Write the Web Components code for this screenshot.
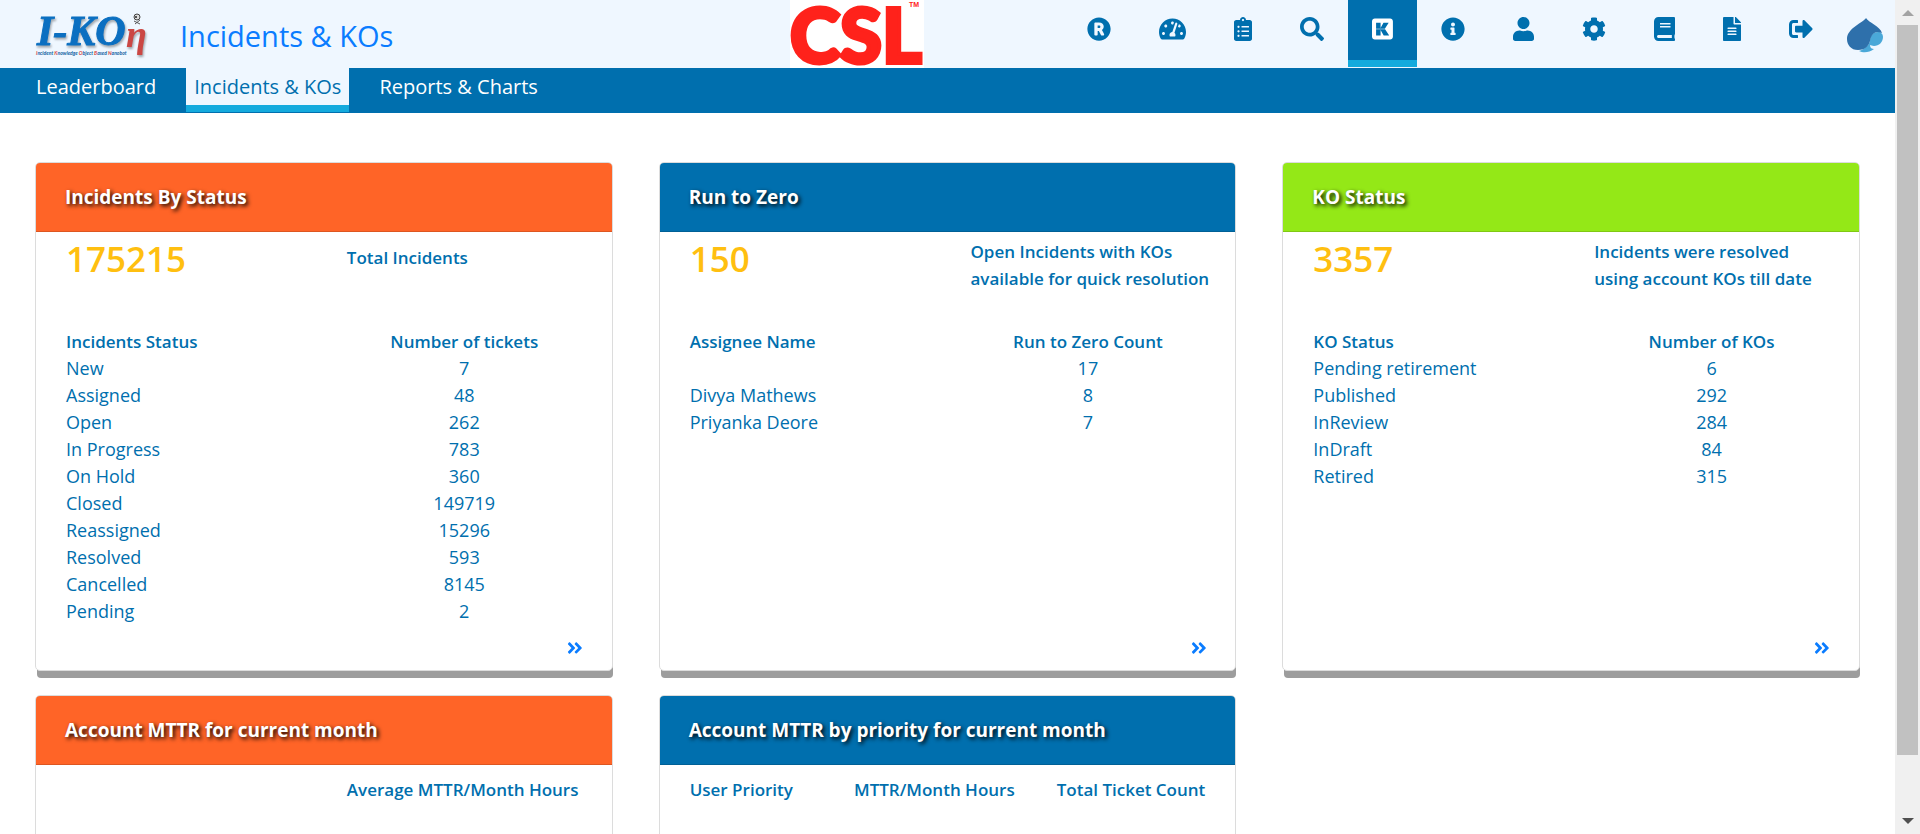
<!DOCTYPE html>
<html lang="en">
<head>
<meta charset="utf-8">
<title>Incidents &amp; KOs</title>
<style>
  body { margin: 0; background: #fff; font-family: "Open Sans", "Noto Sans", sans-serif; color: #006fae; }
</style>
</head>
<body>
<app-shell>
  <app-header slot="header" heading="Incidents &amp; KOs"></app-header>
  <app-tabs slot="tabs"></app-tabs>
  <status-card tone="orange" heading="Incidents By Status" more>
    <stat-line value="175215" single>Total Incidents</stat-line>
    <count-table data-head="Incidents Status|Number of tickets" data-rows="New|7;Assigned|48;Open|262;In Progress|783;On Hold|360;Closed|149719;Reassigned|15296;Resolved|593;Cancelled|8145;Pending|2"></count-table>
  </status-card>
  <status-card tone="blue" heading="Run to Zero" more>
    <stat-line value="150">Open Incidents with KOs<br>available for quick resolution</stat-line>
    <count-table data-head="Assignee Name|Run to Zero Count" data-rows="|17;Divya Mathews|8;Priyanka Deore|7"></count-table>
  </status-card>
  <status-card tone="green" heading="KO Status" more>
    <stat-line value="3357">Incidents were resolved<br>using account KOs till date</stat-line>
    <count-table data-head="KO Status|Number of KOs" data-rows="Pending retirement|6;Published|292;InReview|284;InDraft|84;Retired|315"></count-table>
  </status-card>
  <status-card tone="orange" heading="Account MTTR for current month">
    <mttr-columns layout="half"><span></span><span>Average MTTR/Month Hours</span></mttr-columns>
  </status-card>
  <status-card tone="blue" heading="Account MTTR by priority for current month">
    <mttr-columns layout="spread"><span>User Priority</span><span>MTTR/Month Hours</span><span>Total Ticket Count</span></mttr-columns>
  </status-card>
</app-shell>

<script>
const define = (name, html, setup) => {
  const template = document.createElement('template');
  template.innerHTML = html;
  customElements.define(name, class extends HTMLElement {
    constructor() {
      super();
      this.attachShadow({ mode: 'open' }).append(template.content.cloneNode(true));
    }
    connectedCallback() { if (setup) setup(this, this.shadowRoot); }
  });
};

/* name: [viewBox width, path] */
const ICONS = {
  registered: [512, 'M285.363 207.475c0 18.6-9.831 28.431-28.431 28.431h-29.876v-56.14h23.378c28.668 0 34.929 8.773 34.929 27.709zM504 256c0 136.967-111.033 248-248 248S8 392.967 8 256 119.033 8 256 8s248 111.033 248 248zM363.411 360.414c-46.729-84.825-43.299-78.636-44.702-80.98 23.432-15.172 37.945-42.979 37.945-74.486 0-54.244-31.5-89.252-105.498-89.252h-70.255c-13.255 0-24 10.745-24 24V372c0 13.255 10.745 24 24 24h22.567c13.255 0 24-10.745 24-24v-71.663h25.556l44.129 82.937a24.001 24.001 0 0 0 21.188 12.727h24.464c18.261-.001 29.829-19.591 20.606-35.587z'],
  dashboard: [576, 'M288 32C128.94 32 0 160.94 0 320c0 52.8 14.25 102.26 39.06 144.8 5.61 9.62 16.3 15.2 27.44 15.2h443c11.14 0 21.83-5.58 27.44-15.2C561.75 422.26 576 372.8 576 320c0-159.06-128.94-288-288-288zm0 64c14.71 0 26.58 10.13 30.32 23.65-1.11 2.26-2.64 4.23-3.45 6.67l-9.22 27.67c-5.13 3.49-10.97 6.01-17.64 6.01-17.67 0-32-14.33-32-32S270.33 96 288 96zM96 384c-17.67 0-32-14.33-32-32s14.33-32 32-32 32 14.33 32 32-14.33 32-32 32zm48-160c-17.67 0-32-14.33-32-32s14.33-32 32-32 32 14.33 32 32-14.33 32-32 32zm246.77-72.41l-61.33 184C343.13 347.33 352 364.54 352 384c0 11.72-3.38 22.55-8.88 32H232.88c-5.5-9.45-8.88-20.28-8.88-32 0-33.94 26.5-61.43 59.9-63.59l61.34-184.01c4.17-12.56 17.73-19.45 30.36-15.17 12.57 4.19 19.35 17.79 15.17 30.36zm14.66 57.2l15.52-46.55c3.47-1.29 7.13-2.23 11.05-2.23 17.67 0 32 14.33 32 32s-14.33 32-32 32c-11.38-.01-20.89-6.28-26.57-15.22zM480 384c-17.67 0-32-14.33-32-32s14.33-32 32-32 32 14.33 32 32-14.33 32-32 32z'],
  clipboard: [384, 'M336 64h-80c0-35.3-28.7-64-64-64s-64 28.7-64 64H48C21.5 64 0 85.5 0 112v352c0 26.5 21.5 48 48 48h288c26.5 0 48-21.5 48-48V112c0-26.5-21.5-48-48-48zM96 424c-13.3 0-24-10.7-24-24s10.7-24 24-24 24 10.7 24 24-10.7 24-24 24zm0-96c-13.3 0-24-10.7-24-24s10.7-24 24-24 24 10.7 24 24-10.7 24-24 24zm0-96c-13.3 0-24-10.7-24-24s10.7-24 24-24 24 10.7 24 24-10.7 24-24 24zm96-192c13.3 0 24 10.7 24 24s-10.7 24-24 24-24-10.7-24-24 10.7-24 24-24zm128 368c0 4.4-3.6 8-8 8H168c-4.4 0-8-3.6-8-8v-16c0-4.4 3.6-8 8-8h144c4.4 0 8 3.6 8 8v16zm0-96c0 4.4-3.6 8-8 8H168c-4.4 0-8-3.6-8-8v-16c0-4.4 3.6-8 8-8h144c4.4 0 8 3.6 8 8v16zm0-96c0 4.4-3.6 8-8 8H168c-4.4 0-8-3.6-8-8v-16c0-4.4 3.6-8 8-8h144c4.4 0 8 3.6 8 8v16z'],
  search: [512, 'M505 442.7L405.3 343c-4.5-4.5-10.6-7-17-7H372c27.6-35.3 44-79.7 44-128C416 93.1 322.9 0 208 0S0 93.1 0 208s93.1 208 208 208c48.3 0 92.7-16.4 128-44v16.3c0 6.4 2.5 12.5 7 17l99.7 99.7c9.4 9.4 24.6 9.4 33.9 0l28.3-28.3c9.4-9.4 9.4-24.6.1-34zM208 336c-70.7 0-128-57.2-128-128 0-70.7 57.2-128 128-128 70.7 0 128 57.2 128 128 0 70.7-57.2 128-128 128z'],
  ko: [448, 'M386.5 34h-327C26.8 34 0 60.8 0 93.5v327.1C0 453.2 26.8 480 59.5 480h327.1c33 0 59.5-26.8 59.5-59.5v-327C446 60.8 419.2 34 386.5 34zM87.1 120.8h96v116l61.8-116h110.9l-81.2 132H87.1v-132zm161.8 272.1l-65.7-113.6v113.6h-96V262.1h191.5l88.6 130.8H248.9z'],
  info: [512, 'M256 8C119.043 8 8 119.083 8 256c0 136.997 111.043 248 248 248s248-111.003 248-248C504 119.083 392.957 8 256 8zm0 110c23.196 0 42 18.804 42 42s-18.804 42-42 42-42-18.804-42-42 18.804-42 42-42zm56 254c0 6.627-5.373 12-12 12h-88c-6.627 0-12-5.373-12-12v-24c0-6.627 5.373-12 12-12h12v-64h-12c-6.627 0-12-5.373-12-12v-24c0-6.627 5.373-12 12-12h64c6.627 0 12 5.373 12 12v100h12c6.627 0 12 5.373 12 12v24z'],
  user: [448, 'M224 256c70.7 0 128-57.3 128-128S294.7 0 224 0 96 57.3 96 128s57.3 128 128 128zm89.6 32h-16.7c-22.2 10.2-46.9 16-72.9 16s-50.6-5.8-72.9-16h-16.7C60.2 288 0 348.2 0 422.4V464c0 26.5 21.5 48 48 48h352c26.5 0 48-21.5 48-48v-41.6c0-74.2-60.2-134.4-134.4-134.4z'],
  settings: [512, 'M487.4 315.7l-42.6-24.6c4.3-23.2 4.3-47 0-70.2l42.6-24.6c4.9-2.8 7.1-8.6 5.5-14-11.1-35.6-30-67.8-54.7-94.6-3.8-4.1-10-5.1-14.8-2.3L380.8 110c-17.9-15.4-38.5-27.3-60.8-35.1V25.8c0-5.6-3.9-10.5-9.4-11.7-36.7-8.2-74.3-7.8-109.2 0-5.5 1.2-9.4 6.1-9.4 11.7V75c-22.2 7.9-42.8 19.8-60.8 35.1L88.7 85.5c-4.9-2.8-11-1.9-14.8 2.3-24.7 26.7-43.6 58.9-54.7 94.6-1.7 5.4.6 11.2 5.5 14L67.3 221c-4.3 23.2-4.3 47 0 70.2l-42.6 24.6c-4.9 2.8-7.1 8.6-5.5 14 11.1 35.6 30 67.8 54.7 94.6 3.8 4.1 10 5.1 14.8 2.3l42.6-24.6c17.9 15.4 38.5 27.3 60.8 35.1v49.2c0 5.6 3.9 10.5 9.4 11.7 36.7 8.2 74.3 7.8 109.2 0 5.5-1.2 9.4-6.1 9.4-11.7v-49.2c22.2-7.9 42.8-19.8 60.8-35.1l42.6 24.6c4.9 2.8 11 1.9 14.8-2.3 24.7-26.7 43.6-58.9 54.7-94.6 1.5-5.5-.7-11.3-5.6-14.1zM256 336c-44.1 0-80-35.9-80-80s35.9-80 80-80 80 35.9 80 80-35.9 80-80 80z'],
  book: [448, 'M448 360V24c0-13.3-10.7-24-24-24H96C43 0 0 43 0 96v320c0 53 43 96 96 96h328c13.3 0 24-10.7 24-24v-16c0-7.5-3.5-14.3-8.9-18.7-4.2-15.4-4.2-59.3 0-74.7 5.4-4.3 8.9-11.1 8.9-18.6zM128 134c0-3.3 2.7-6 6-6h212c3.3 0 6 2.7 6 6v20c0 3.3-2.7 6-6 6H134c-3.3 0-6-2.7-6-6v-20zm0 64c0-3.3 2.7-6 6-6h212c3.3 0 6 2.7 6 6v20c0 3.3-2.7 6-6 6H134c-3.3 0-6-2.7-6-6v-20zm253.4 250H96c-17.7 0-32-14.3-32-32 0-17.6 14.4-32 32-32h285.4c-1.9 17.1-1.9 46.9 0 64z'],
  file: [384, 'M224 136V0H24C10.7 0 0 10.7 0 24v464c0 13.3 10.7 24 24 24h336c13.3 0 24-10.7 24-24V160H248c-13.2 0-24-10.8-24-24zm64 236c0 6.6-5.4 12-12 12H108c-6.6 0-12-5.4-12-12v-8c0-6.6 5.4-12 12-12h168c6.6 0 12 5.4 12 12v8zm0-64c0 6.6-5.4 12-12 12H108c-6.6 0-12-5.4-12-12v-8c0-6.6 5.4-12 12-12h168c6.6 0 12 5.4 12 12v8zm0-72v8c0 6.6-5.4 12-12 12H108c-6.6 0-12-5.4-12-12v-8c0-6.6 5.4-12 12-12h168c6.6 0 12 5.4 12 12zm96-114.1v6.1H256V0h6.1c6.4 0 12.5 2.5 17 7l97.9 98c4.5 4.5 7 10.6 7 16.9z'],
  logout: [512, 'M497 273L329 441c-15 15-41 4.5-41-17v-96H152c-13.3 0-24-10.7-24-24v-96c0-13.3 10.7-24 24-24h136V88c0-21.4 25.9-32 41-17l168 168c9.3 9.4 9.3 24.6 0 34zM192 436v-40c0-6.6-5.4-12-12-12H96c-17.7 0-32-14.3-32-32V160c0-17.7 14.3-32 32-32h84c6.6 0 12-5.4 12-12V76c0-6.6-5.4-12-12-12H96c-53 0-96 43-96 96v192c0 53 43 96 96 96h84c6.6 0 12-5.4 12-12z'],
  more: [448, 'M224.3 273l-136 136c-9.4 9.4-24.6 9.4-33.9 0l-22.6-22.6c-9.4-9.4-9.4-24.6 0-33.9l96.4-96.4-96.4-96.4c-9.4-9.4-9.4-24.6 0-33.9L54.3 103c9.4-9.4 24.6-9.4 33.9 0l136 136c9.5 9.4 9.5 24.6.1 34zm192-34l-136-136c-9.4-9.4-24.6-9.4-33.9 0l-22.6 22.6c-9.4 9.4-9.4 24.6 0 33.9l96.4 96.4-96.4 96.4c-9.4 9.4-9.4 24.6 0 33.9l22.6 22.6c9.4 9.4 24.6 9.4 33.9 0l136-136c9.4-9.2 9.4-24.4 0-33.8z']
};

define('app-icon', `<style>:host{display:block} svg{display:block;height:100%;fill:currentColor}</style><svg aria-hidden="true"><path/></svg>`, (el, root) => {
  const [width, path] = ICONS[el.getAttribute('name')];
  root.querySelector('svg').setAttribute('viewBox', `0 0 ${width} 512`);
  root.querySelector('svg').style.aspectRatio = `${width} / 512`;
  root.querySelector('path').setAttribute('d', path);
});

define('page-scrollbar', `<style>
  :host{display:flex;flex-direction:column;align-items:center;justify-content:space-between;background:#f0f0f0;padding:10px 0;box-sizing:border-box}
  i{border:6px solid transparent}
  .up{border-top:0;border-bottom-color:#a3a3a3}
  .down{border-bottom:0;border-top-color:#505050}
  .track{flex:1;width:21px;margin:9px 0 0}
  .thumb{height:92%;background:#c1c1c1}
</style><i class="up"></i><div class="track"><div class="thumb"></div></div><i class="down"></i>`);

define('app-shell', `<style>
  :host{display:grid;grid-template-columns:minmax(0,1fr) 25px;height:100vh;overflow:hidden}
  .page{overflow:hidden}
  main{display:grid;grid-template-columns:repeat(3,minmax(0,1fr));gap:24px 46px;padding:49px 35px}
</style>
<div class="page"><slot name="header"></slot><slot name="tabs"></slot><main><slot></slot></main></div>
<page-scrollbar></page-scrollbar>`);

define('ikon-logo', `<style>:host{display:block} svg{display:block;overflow:visible}
  .word{font:italic 700 42px "Liberation Serif",serif;fill:#0b6fc1;stroke:#0b6fc1}
  .eta{font:italic 700 38px "Liberation Serif",serif;fill:#cb4744}
  .tag{font:italic 700 5px "Lato",sans-serif;fill:#0f5f9f}
  .tag tspan{fill:#d8443c}
  .shade{filter:drop-shadow(1px 2px 1px #0005)}
</style>
<svg width="114" height="68" viewBox="0 0 114 68" role="img" aria-label="I-KOn">
  <g class="shade"><text class="word" x="1" y="45">I-KO</text><text class="eta" x="90" y="47">η</text></g>
  <text class="tag" x="0" y="55"><tspan>I</tspan>ncident <tspan>K</tspan>nowledge <tspan>O</tspan>bject <tspan>B</tspan>ased <tspan>N</tspan>anobot</text>
  <circle cx="101" cy="17" r="3" fill="#ddd" stroke="#444"/><circle cx="100" cy="17" r="1" fill="#222"/><path d="M98 21l6 3M104 20l-5 4" stroke="#555"/>
</svg>`);

define('csl-logo', `<style>:host{display:block;background:#fff} svg{display:block;overflow:visible}
  .word{font:900 76px "Lato",sans-serif;fill:#ff221b;stroke:#ff221b;stroke-width:4px}
  .tm{font:700 7px "Liberation Sans",sans-serif;fill:#ff221b}
</style>
<svg width="134" height="68" viewBox="0 0 134 68" role="img" aria-label="CSL"><text class="word" x="0" y="63">CSL</text><text class="tm" x="119" y="7">TM</text></svg>`);

define('spade-logo', `<style>:host{display:block} svg{display:block}</style>
<svg width="38" height="36" viewBox="0 0 38 36" role="img" aria-label="Capgemini">
  <path fill="#4aa8d8" d="M24 23C24 17 28 14 32 14c3 0 5 2 5 5 0 5-4 9-9 9-2 0-3-1-4-1 0 3 2 4 4 4-5 4-11 4-15 2 6-2 10-6 11-10z"/>
  <path fill="#2e70ab" d="M20 0c-2 4-19 10-19 21 0 6 4 11 11 11 8 0 11-5 12-9 1-6 4-9 8-9l4 1C34 8 23 5 20 0z"/>
</svg>`);

define('app-header', `<style>
  :host{display:flex;height:68px;background:#eff7ff}
  .brand{flex:0 0 41.7%;display:flex;box-sizing:border-box;padding-left:36px;gap:30px}
  h1{margin:0;font-size:29px;font-weight:400;line-height:72px;color:#0a7cff;white-space:nowrap}
  nav{display:flex;margin-left:auto}
  a{display:block;padding:17px 24px 19px;height:24px;color:#006fae;border-bottom:7px solid transparent}
  a[aria-current]{background:#006fae;color:#fff;border-color:#14aadd}
  app-icon{height:24px}
  spade-logo{margin:18px 11px 0 9px}
</style>
<div class="brand"><ikon-logo></ikon-logo><h1></h1></div>
<csl-logo></csl-logo>
<nav aria-label="Main"></nav>
<spade-logo></spade-logo>`, (el, root) => {
  root.querySelector('h1').textContent = el.getAttribute('heading');
  root.querySelector('nav').innerHTML = ['registered', 'dashboard', 'clipboard', 'search', 'ko', 'info', 'user', 'settings', 'book', 'file', 'logout']
    .map(n => `<a href="#${n}" aria-label="${n}"${n === 'ko' ? ' aria-current="page"' : ''}><app-icon name="${n}"></app-icon></a>`).join('');
});

define('app-tabs', `<style>
  :host{display:block;background:#006fae;height:45px}
  nav{display:flex;gap:22px;padding-left:28px}
  a{padding:0 8px;font-size:20px;font-weight:500;line-height:37px;color:#fff;text-decoration:none;border-bottom:7px solid transparent}
  a[aria-current]{background:#eff7ff;color:#006fae;border-color:#14aadd}
</style>
<nav aria-label="Section"><a href="#leaderboard">Leaderboard</a><a href="#incidents" aria-current="page">Incidents &amp; KOs</a><a href="#reports">Reports &amp; Charts</a></nav>`);

define('status-card', `<style>
  :host{display:flex;flex-direction:column;box-sizing:border-box;min-height:509px;border:1px solid #dcdcdc;border-radius:5px;background:#fff;box-shadow:1px 8px 0 -1px #9d9d9d}
  :host([tone=orange]){--tone:#ff6427}
  :host([tone=blue]){--tone:#006fae}
  :host([tone=green]){--tone:#94e817}
  h2{margin:0;padding:0 29px;font-size:19px;font-weight:700;line-height:68px;color:#fff;background:var(--tone);border-bottom:1px solid #0002;border-radius:4px 4px 0 0;text-shadow:2px 2px 4px #000;white-space:nowrap}
  .body{flex:1;padding:6px 30px 0}
  footer{display:flex;justify-content:flex-end;padding:0 29px 13px;color:#0a7cff}
  footer a{color:inherit}
  app-icon{height:18px}
  :host(:not([more])) footer{display:none}
</style>
<h2></h2><div class="body"><slot></slot></div>
<footer><a href="#details" aria-label="More"><app-icon name="more"></app-icon></a></footer>`, (el, root) => {
  root.querySelector('h2').textContent = el.getAttribute('heading');
});

define('stat-line', `<style>
  :host{display:grid;grid-template-columns:repeat(2,minmax(0,1fr));gap:46px;min-height:54px;margin-bottom:36px}
  strong{font-size:35px;font-weight:600;line-height:42px;color:#ffbf10}
  p{margin:0;font-size:17px;font-weight:600;line-height:27px;white-space:nowrap}
  :host([single]) p{padding-top:6px}
</style><strong></strong><p><slot></slot></p>`, (el, root) => {
  root.querySelector('strong').textContent = el.getAttribute('value');
});

define('count-table', `<style>
  :host{display:block}
  table{width:100%;border-collapse:collapse;table-layout:fixed;font-size:18px;line-height:27px}
  td,th{padding:0;text-align:left;height:27px}
  th{font-size:17px;font-weight:600}
  .gap{width:46px}
  td:last-child,th:last-child{text-align:center}
</style><table><colgroup><col><col class="gap"><col></colgroup><thead></thead><tbody></tbody></table>`, (el, root) => {
  const row = (text, tag) => { const [a, b] = text.split('|'); return `<tr><${tag}>${a}</${tag}><td></td><${tag}>${b}</${tag}></tr>`; };
  root.querySelector('thead').innerHTML = row(el.dataset.head, 'th');
  root.querySelector('tbody').innerHTML = el.dataset.rows.split(';').map(r => row(r, 'td')).join('');
});

define('mttr-columns', `<style>
  :host{display:grid;padding-top:5px;font-size:17px;font-weight:600;line-height:27px;white-space:nowrap}
  :host([layout=half]){grid-template-columns:repeat(2,minmax(0,1fr));gap:46px}
  :host([layout=spread]){grid-template-columns:1fr auto auto;gap:42px}
</style><slot></slot>`);
</script>
</body>
</html>
